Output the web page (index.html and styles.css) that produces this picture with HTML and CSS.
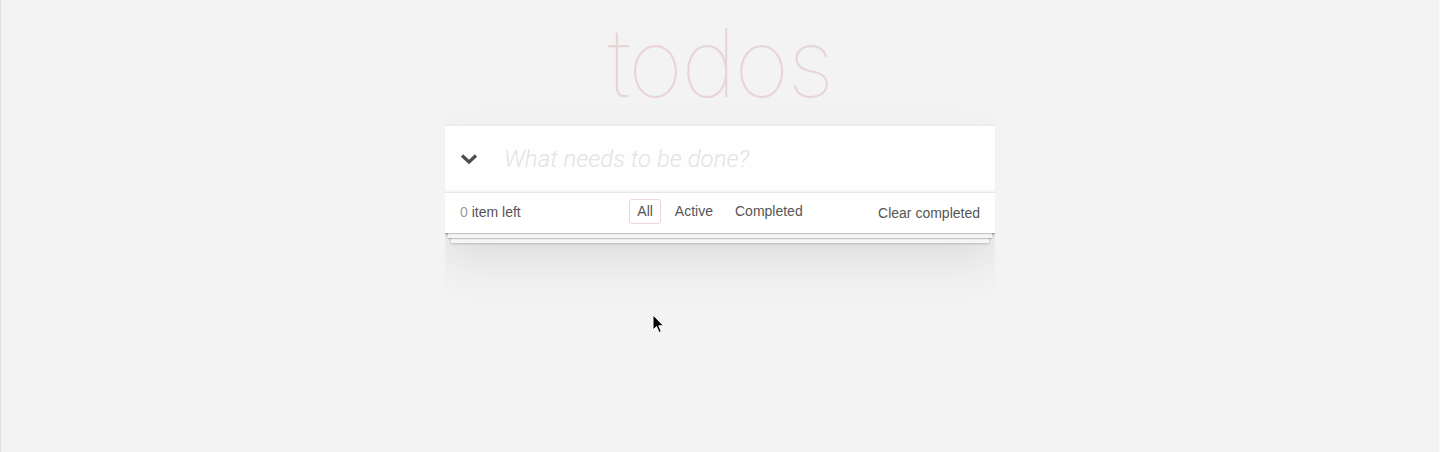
FILE: index.html
```html
<!DOCTYPE html>
<html lang="en">
<head>
<meta charset="utf-8">
<title>TodoMVC</title>
<link rel="stylesheet" href="styles.css">
</head>
<body>
<section class="todoapp">
  <header class="header">
    <h1>todos</h1>
    <div class="entry">
      <span class="toggle-all"><svg width="18" height="12" viewBox="0 0 18 12"><polyline points="2,2.5 9,9 16,2.5" fill="none" stroke="#4d4d4d" stroke-width="3.2"/></svg></span>
      <input class="new-todo" placeholder="What needs to be done?">
    </div>
  </header>
  <footer class="footer">
    <span class="todo-count"><strong>0</strong> item left</span>
    <ul class="filters">
      <li><a class="selected">All</a></li>
      <li><a>Active</a></li>
      <li><a>Completed</a></li>
    </ul>
    <button class="clear-completed">Clear completed</button>
  </footer>
</section>
<svg class="cursor" width="14" height="22" viewBox="0 0 14 22">
  <path d="M1 1 L1 16 L4.5 12.5 L7 18.5 L9.3 17.5 L6.8 11.8 L11.5 11.8 Z" fill="#000" stroke="#fff" stroke-width="1"/>
</svg>
</body>
</html>
```
FILE: styles.css
```css
html, body { margin: 0; padding: 0; }
html {
  background: #f3f3f3;
}
html::after {
  content: '';
  position: fixed;
  top: 0;
  bottom: 0;
  left: 0;
  right: 0;
  border-left: 1px solid #e2e2e2;
  border-right: 1px solid #fafafa;
  pointer-events: none;
}
body {
  font-family: "Helvetica Neue", Helvetica, "Liberation Sans", Arial, sans-serif;
  font-size: 14px;
  line-height: 1.4em;
  color: #4d4d4d;
  max-width: 550px;
  margin: 0 auto;
  padding-bottom: 150px;
  font-weight: 300;
  -webkit-font-smoothing: antialiased;
}
.todoapp {
  background: #fff;
  margin: 126px 0 40px 0;
  position: relative;
  box-shadow: 0 2px 4px 0 rgba(0,0,0,0.2), 0 25px 50px 0 rgba(0,0,0,0.1);
}
.todoapp h1 {
  position: absolute;
  top: -130px;
  width: 100%;
  margin: 0;
  font-family: Inter, "Helvetica Neue", sans-serif;
  font-size: 95px;
  line-height: 1.4em;
  font-weight: 100;
  text-align: center;
  color: rgba(175, 47, 47, 0.15);
  letter-spacing: -2px;
}
.entry {
  display: flex;
  align-items: center;
  position: relative;
}
.toggle-all {
  position: absolute;
  left: 0;
  top: 0;
  width: 50px;
  height: 66px;
  padding-left: 15px;
  box-sizing: border-box;
  display: flex;
  align-items: center;
  padding-bottom: 1px;
}
.toggle-all svg { display: block; }
.new-todo {
  flex: 1;
  margin: 0;
  height: 66px;
  box-sizing: border-box;
  padding: 16px 16px 16px 59px;
  border: none;
  outline: none;
  background: rgba(0,0,0,0.003);
  box-shadow: inset 0 -2px 1px rgba(0,0,0,0.03);
  font-family: Roboto, "Liberation Sans", Arial, sans-serif;
  font-size: 24px;
  font-weight: 300;
  color: #4d4d4d;
}
.new-todo::placeholder {
  font-style: italic;
  font-weight: 300;
  color: #e3e3e3;
}
.footer {
  position: relative;
  display: flex;
  align-items: center;
  justify-content: space-between;
  height: 41px;
  box-sizing: border-box;
  padding: 8px 15px 10px;
  color: #777;
  border-top: 1px solid #e6e6e6;
}
.footer::before {
  content: '';
  position: absolute;
  right: 0;
  bottom: 0;
  left: 0;
  height: 50px;
  overflow: hidden;
  box-shadow: 0 1px 1px rgba(0,0,0,0.2),
              0 8px 0 -3px #f6f6f6,
              0 9px 1px -3px rgba(0,0,0,0.2),
              0 16px 0 -6px #f6f6f6,
              0 17px 2px -6px rgba(0,0,0,0.2);
  pointer-events: none;
}
.todo-count {
  position: relative;
  color: #555;
  font-weight: 400;
  padding-top: 2px;
}
.todo-count strong { font-weight: 300; color: #999; }
.filters {
  position: absolute;
  left: 0;
  right: 0;
  top: 6px;
  margin: 0;
  padding: 0;
  list-style: none;
  display: flex;
  justify-content: center;
}
.filters a {
  display: block;
  margin: 0 3px;
  padding: 1px 7px 2px;
  border: 1px solid transparent;
  border-radius: 3px;
  color: #555;
  font-weight: 400;
  line-height: 20px;
}
.filters a.selected { border-color: rgba(175,47,47,0.2); }
.clear-completed {
  position: relative;
  margin: 0;
  padding: 2px 0 0;
  border: 0;
  background: none;
  font: inherit;
  font-weight: 400;
  line-height: 20px;
  color: #555;
  cursor: pointer;
}
.cursor {
  position: absolute;
  left: 652px;
  top: 314px;
}
```
